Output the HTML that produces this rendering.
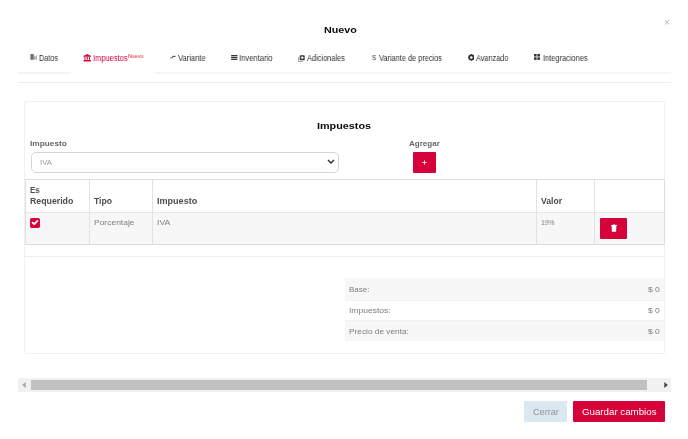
<!DOCTYPE html>
<html lang="es">
<head>
<meta charset="utf-8">
<title>Nuevo</title>
<style>
*{box-sizing:border-box;margin:0;padding:0}
html,body{width:688px;height:439px;overflow:hidden;background:#fff}
body{position:relative;font-family:"Liberation Sans",sans-serif;font-size:8px;color:#444}
.t{position:absolute;white-space:nowrap;line-height:10px;height:10px;transform-origin:0 0;will-change:transform}
.b{font-weight:bold}
.hl{position:absolute;height:1px}
.vl{position:absolute;width:1px;background:#e2e2e2}
.box{position:absolute}
.t,svg{filter:blur(.3px)}
</style>
</head>
<body>

<!-- tab borders -->
<div class="hl" style="left:18px;top:72.300px;width:53px;height:1.300px;background:#f4f4f4"></div>
<div class="hl" style="left:155px;top:72.300px;width:516px;height:1.300px;background:#f6f6f6"></div>
<div class="hl" style="left:18px;top:82px;width:653px;background:#ececec"></div>

<!-- close -->
<div class="t" id="close" style="left:664.400px;top:17.600px;font-size:10.400px;color:#b8b8b8">×</div>

<!-- tab icons -->
<svg class="box" style="left:30px;top:54px" width="7" height="6" viewBox="0 0 7 6"><rect x="0.400" y="0" width="3.400" height="5.800" fill="#707070"/><rect x="3.800" y="1.600" width="3" height="4.200" fill="#c6c6c6"/><rect x="4.400" y="2.400" width=".7" height="2.600" fill="#999"/><rect x="6.100" y="1.600" width=".7" height="4.200" fill="#a8a8a8"/></svg>
<svg class="box" style="left:83px;top:54px" width="8.5" height="7.6" viewBox="0 0 8 8"><path d="M4 0L0 2V2.8H8V2Z M1 3.2H2.2V6H1Z M3.4 3.2H4.6V6H3.4Z M5.8 3.2H7V6H5.8Z M0.4 6.3H7.6V7H0.4Z M0 7.2H8V8H0Z" fill="#d6033b"/></svg>
<svg class="box" style="left:170px;top:55px" width="6" height="5" viewBox="0 0 6 5"><path d="M.3 3.100L2.900 2.300" stroke="#8c8c8c" stroke-width="1.500" fill="none"/><path d="M2.300 1.400H5.300" stroke="#3a3a3a" stroke-width=".9" fill="none"/><path d="M4.500 .5L5.700 1.400L4.500 2.300Z" fill="#3a3a3a"/></svg>
<svg class="box" style="left:231.2px;top:54.5px" width="6.6" height="5.4" viewBox="0 0 7 6"><rect x="0" y="0" width="7" height="1.500" fill="#333"/><rect x="0" y="2.25" width="7" height="1.5" fill="#333"/><rect x="0" y="4.500" width="7" height="1.5" fill="#333"/></svg>
<svg class="box" style="left:298px;top:54.500px" width="7" height="7" viewBox="0 0 7 7"><path d="M.6 2.200V6.400H4.900" fill="none" stroke="#8a8a8a" stroke-width=".8"/><rect x="1.700" y=".2" width="5" height="5" rx=".7" fill="#3a3a3a"/><path d="M4.200 1.200V4.200M2.700 2.700H5.700" stroke="#fff" stroke-width="1"/></svg>
<div class="t" style="left:372px;top:53.400px;font-size:7.400px;color:#6a6a6a">$</div>
<svg class="box" style="left:467.700px;top:54.300px" width="6.600" height="6.900" viewBox="0 0 6 6"><circle cx="3" cy="3" r="2.100" fill="none" stroke="#333" stroke-width="1.400"/><path d="M3 0V6M0 3H6M.9 .9L5.100 5.100M5.100 .9L.9 5.100" stroke="#333" stroke-width=".9"/><circle cx="3" cy="3" r="1.100" fill="#fff"/></svg>
<svg class="box" style="left:534.200px;top:54.200px" width="6" height="5.900" viewBox="0 0 6 6"><rect x="0" y="0" width="2.600" height="2.600" fill="#333"/><rect x="3.400" y="0" width="2.600" height="2.600" fill="#333"/><rect x="0" y="3.400" width="2.600" height="2.600" fill="#333"/><rect x="3.400" y="3.400" width="2.600" height="2.600" fill="#333"/></svg>

<!-- card -->
<div class="box" id="card" style="left:24px;top:101px;width:641px;height:253px;border:1px solid #f1f1f1;border-radius:2px;box-shadow:0 0 1px rgba(0,0,0,.07)"></div>

<!-- select -->
<div class="box" id="select" style="left:31px;top:152px;width:308px;height:20.500px;border:1px solid #d5d5d5;border-radius:5px;background:#fff"></div>
<svg class="box" style="left:326.700px;top:159px" width="8" height="6" viewBox="0 0 8 6"><path d="M1 1L4 4L7 1" stroke="#333" stroke-width="1.500" fill="none"/></svg>

<!-- add button -->
<div class="box" id="addbtn" style="left:413px;top:152px;width:22.600px;height:21px;background:#d6033b;border-radius:1px"></div>
<svg class="box" style="left:421.700px;top:160.300px" width="5" height="5" viewBox="0 0 5 5"><path d="M2.500 .3V4.700M.3 2.500H4.700" stroke="#fff" stroke-width=".9" opacity=".92"/></svg>

<!-- table -->
<div class="box" id="tbl" style="left:25px;top:179px;width:640px;height:65.600px;border:1px solid #dedede;background:#fff"></div>
<div class="box" id="rowbg" style="left:26px;top:213px;width:638px;height:30.600px;background:#f7f7f7"></div>
<div class="hl" style="left:26px;top:212px;width:638px;background:#e6e6e6"></div>
<div class="vl" style="left:89px;top:180px;height:63.600px"></div>
<div class="vl" style="left:152px;top:180px;height:63.600px"></div>
<div class="vl" style="left:536px;top:180px;height:63.600px"></div>
<div class="vl" style="left:594px;top:180px;height:63.600px"></div>

<svg class="box" style="left:30px;top:218px" width="10" height="10" viewBox="0 0 10 10"><rect width="10" height="10" rx="1.800" fill="#d6033b"/><path d="M2.500 4.600L4.200 6.200L7.500 2.900" stroke="#fff" stroke-width="1.700" stroke-linecap="round" stroke-linejoin="round" fill="none"/></svg>

<div class="box" id="delbtn" style="left:600px;top:218px;width:27.200px;height:21px;background:#d6033b;border-radius:1px"></div>
<svg class="box" style="left:610.700px;top:224.400px" width="6" height="8" viewBox="0 0 6 8"><path d="M.1 1H5.900V1.900H.1Z M1.800 .5H4.200V1H1.800Z M.6 1.900H5.400L5.100 7.700H.9Z" fill="#fff"/></svg>

<!-- separator -->
<div class="hl" style="left:25px;top:256.400px;width:639px;background:#eee"></div>

<!-- summary -->
<div class="box" style="left:345px;top:278px;width:319px;height:22px;background:#f7f7f7"></div>
<div class="box" style="left:345px;top:320px;width:319px;height:21px;background:#f7f7f7"></div>
<div class="hl" style="left:345px;top:300px;width:319px;background:#f2f2f2"></div>
<div class="hl" style="left:345px;top:320px;width:319px;background:#f2f2f2"></div>

<!-- scrollbar -->
<div class="box" style="left:18px;top:378.400px;width:653px;height:13.300px;background:#f1f1f1"></div>
<div class="box" style="left:31px;top:380px;width:616px;height:9.500px;background:#c1c1c1"></div>
<svg class="box" style="left:22.200px;top:381.800px" width="4" height="6" viewBox="0 0 4 6"><path d="M3.700 0V6L.2 3Z" fill="#a3a3a3"/></svg>
<svg class="box" style="left:663.700px;top:381.800px" width="4" height="6" viewBox="0 0 4 6"><path d="M.3 0V6L3.800 3Z" fill="#404040"/></svg>

<!-- footer buttons -->
<div class="box" id="cerrarbg" style="left:523.800px;top:401px;width:43.400px;height:20.600px;background:#dce8ef;border-radius:1px"></div>
<div class="box" id="guardarbg" style="left:573px;top:401px;width:92px;height:20.600px;background:#d6033b;border-radius:1px"></div>

<div class="t b" id="title" style="left:324.28px;top:24.77px;font-size:8.6px;color:#0a0a0a;transform:scaleX(1.245)">Nuevo</div>
<div class="t" id="tab1" style="left:38.83px;top:52.79px;font-size:8.4px;color:#303030;transform:scaleX(0.871)">Datos</div>
<div class="t" id="tab2" style="left:93.18px;top:52.79px;font-size:8.4px;color:#d6033b;transform:scaleX(0.896)">Impuestos</div>
<div class="t" id="tab2s" style="left:128.35px;top:51.26px;font-size:5.9px;color:#e0232e;transform:scaleX(0.904)">Nuevo</div>
<div class="t" id="tab3" style="left:177.92px;top:52.79px;font-size:8.4px;color:#303030;transform:scaleX(0.905)">Variante</div>
<div class="t" id="tab4" style="left:239.28px;top:52.79px;font-size:8.4px;color:#303030;transform:scaleX(0.913)">Inventario</div>
<div class="t" id="tab5" style="left:306.69px;top:52.79px;font-size:8.4px;color:#303030;transform:scaleX(0.883)">Adicionales</div>
<div class="t" id="tab6" style="left:379.31px;top:52.79px;font-size:8.4px;color:#303030;transform:scaleX(0.880)">Variante de precios</div>
<div class="t" id="tab7" style="left:475.89px;top:52.79px;font-size:8.4px;color:#303030;transform:scaleX(0.869)">Avanzado</div>
<div class="t" id="tab8" style="left:542.85px;top:52.79px;font-size:8.4px;color:#303030;transform:scaleX(0.888)">Integraciones</div>
<div class="t b" id="h2" style="left:317.31px;top:120.85px;font-size:8.8px;color:#0a0a0a;transform:scaleX(1.229)">Impuestos</div>
<div class="t b" id="lblimp" style="left:30.39px;top:138.67px;font-size:7.3px;color:#666;transform:scaleX(1.136)">Impuesto</div>
<div class="t" id="selval" style="left:40.10px;top:158.27px;font-size:7.3px;color:#9a9a9a;transform:scaleX(1.067)">IVA</div>
<div class="t b" id="lbladd" style="left:408.73px;top:138.57px;font-size:7.3px;color:#666;transform:scaleX(1.099)">Agregar</div>
<div class="t b" id="th1a" style="left:30.29px;top:184.72px;font-size:8.3px;color:#4d4d4d;transform:scaleX(0.952)">Es</div>
<div class="t b" id="th1b" style="left:29.97px;top:195.82px;font-size:8.3px;color:#4d4d4d;transform:scaleX(1.056)">Requerido</div>
<div class="t b" id="th2" style="left:94.35px;top:195.82px;font-size:8.3px;color:#4d4d4d;transform:scaleX(1.040)">Tipo</div>
<div class="t b" id="th3" style="left:157.32px;top:195.82px;font-size:8.3px;color:#4d4d4d;transform:scaleX(1.090)">Impuesto</div>
<div class="t b" id="th4" style="left:541.24px;top:195.82px;font-size:8.3px;color:#4d4d4d;transform:scaleX(1.033)">Valor</div>
<div class="t" id="td2" style="left:94.26px;top:218.47px;font-size:7.3px;color:#808080;transform:scaleX(1.162)">Porcentaje</div>
<div class="t" id="td3" style="left:156.81px;top:218.47px;font-size:7.3px;color:#808080;transform:scaleX(1.188)">IVA</div>
<div class="t" id="td4" style="left:540.94px;top:218.47px;font-size:7.3px;color:#808080;transform:scaleX(0.929)">19%</div>
<div class="t" id="s1" style="left:349.06px;top:284.64px;font-size:7.4px;color:#7c7c7c;transform:scaleX(1.082)">Base:</div>
<div class="t" id="s2" style="left:348.75px;top:306.14px;font-size:7.4px;color:#7c7c7c;transform:scaleX(1.155)">Impuestos:</div>
<div class="t" id="s3" style="left:349.32px;top:327.24px;font-size:7.4px;color:#7c7c7c;transform:scaleX(1.121)">Precio de venta:</div>
<div class="t" id="v1" style="left:647.74px;top:284.64px;font-size:7.4px;color:#7c7c7c;transform:scaleX(1.154)">$ 0</div>
<div class="t" id="v2" style="left:647.53px;top:306.14px;font-size:7.4px;color:#7c7c7c;transform:scaleX(1.154)">$ 0</div>
<div class="t" id="v3" style="left:647.74px;top:327.24px;font-size:7.4px;color:#7c7c7c;transform:scaleX(1.154)">$ 0</div>
<div class="t" id="cerrar" style="left:532.54px;top:406.78px;font-size:9px;color:#8a9197;transform:scaleX(1.016)">Cerrar</div>
<div class="t" id="guardar" style="left:581.91px;top:406.78px;font-size:9px;color:#fff;transform:scaleX(1.079)">Guardar cambios</div>

</body>
</html>
